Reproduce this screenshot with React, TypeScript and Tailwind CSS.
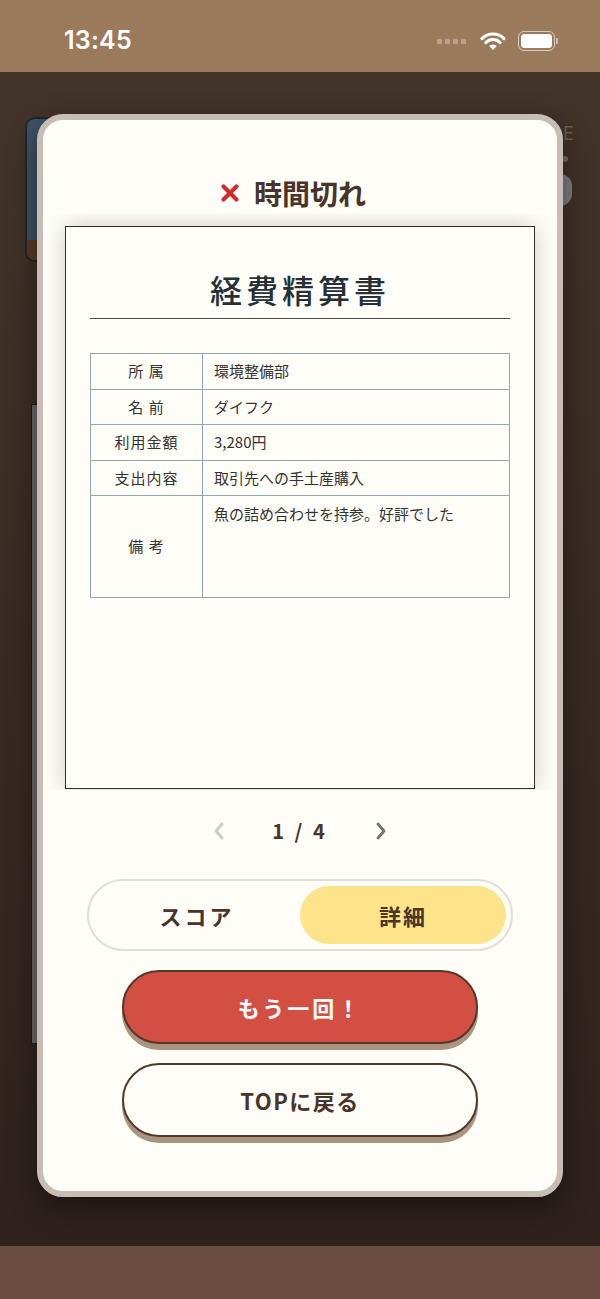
import React from "react";

const JP = { fontFamily: '"Noto Sans CJK JP", "Noto Sans", sans-serif' };

type Row = { label: string; value: string; tall?: boolean };

const ROWS: Row[] = [
  { label: "所 属", value: "環境整備部" },
  { label: "名 前", value: "ダイフク" },
  { label: "利用金額", value: "3,280円" },
  { label: "支出内容", value: "取引先への手土産購入" },
  { label: "備 考", value: "魚の詰め合わせを持参。好評でした", tall: true },
];

function StatusBar() {
  return (
    <div className="h-[72px] bg-[#9b7a5c] flex items-center justify-between pl-[64px] pr-[42px] pt-[10px]">
      <span
        className="text-white text-[25px] font-semibold tracking-[0.2px]"
        style={{ fontFamily: "Inter, Roboto, sans-serif" }}
      >
        13:45
      </span>
      <div className="flex items-center gap-[12px]">
        <div className="flex items-center gap-[3px] mr-[2px]">
          {[0, 1, 2, 3].map(i => (
            <span key={i} className="w-[5px] h-[5px] rounded-[1px] bg-white/30" />
          ))}
        </div>
        <svg width="26" height="20" viewBox="0 0 26 20">
          <path d="M13 19 L9.2 15 A5.5 5.5 0 0 1 16.8 15 Z" fill="#fff" />
          <path d="M5.8 11.6 A10.2 10.2 0 0 1 20.2 11.6" stroke="#fff" strokeWidth="3" fill="none" strokeLinecap="round" />
          <path d="M2 7.6 A15.6 15.6 0 0 1 24 7.6" stroke="#fff" strokeWidth="3" fill="none" strokeLinecap="round" />
        </svg>
        <div className="flex items-center">
          <div className="w-[37px] h-[20px] rounded-[6px] border-[1.5px] border-white/60 p-[2px]">
            <div className="w-full h-full rounded-[3.5px] bg-white" />
          </div>
          <div className="w-[2px] h-[6px] rounded-r-[1px] bg-white/50 ml-[1px]" />
        </div>
      </div>
    </div>
  );
}

function Chevron({ dir, color }: { dir: "left" | "right"; color: string }) {
  return (
    <svg width="14" height="20" viewBox="0 0 14 20">
      <path
        d={dir === "left" ? "M10 3 L4 10 L10 17" : "M4 3 L10 10 L4 17"}
        stroke={color}
        strokeWidth="2.8"
        fill="none"
        strokeLinecap="round"
        strokeLinejoin="round"
      />
    </svg>
  );
}

function Document() {
  return (
    <div className="mx-[22px] h-[563px] border-[1.5px] border-[#2f2f2f] bg-[#fffdf8] shadow-[0_0_22px_rgba(0,0,0,0.2)] px-[24px]">
      <div className="pt-[40px] pb-[7px] border-b border-[#4a4a4a] text-center">
        <h1 className="text-[32px] leading-[44px] font-medium tracking-[4px] text-[#263036]" style={JP}>
          経費精算書
        </h1>
      </div>
      <table className="w-full mt-[34px] border-collapse text-[15px] text-[#333]" style={JP}>
        <tbody>
          {ROWS.map(r => (
            <tr key={r.label} className={r.tall ? "h-[102px]" : "h-[35.5px]"}>
              <td className="w-[112px] border border-[#93a7b0] text-center align-middle tracking-[1px]">{r.label}</td>
              <td
                className={`border border-[#93a7b0] pl-[11px] ${r.tall ? "align-top pt-[7px]" : "align-middle"}`}
              >
                {r.value}
              </td>
            </tr>
          ))}
        </tbody>
      </table>
    </div>
  );
}

function Modal() {
  return (
    <div className="absolute left-[37px] top-[42px] w-[526px] h-[1083px] rounded-[26px] border-[6px] border-[#c8bdb5] bg-[#fffdf7] shadow-[0_10px_30px_rgba(0,0,0,0.45)] flex flex-col">
      <div className="pt-[55px] pr-[14px] h-[91px] flex items-center justify-center gap-[14px]">
        <svg width="20" height="20" viewBox="0 0 20 20">
          <path d="M3.5 3.5 L16.5 16.5 M16.5 3.5 L3.5 16.5" stroke="#d12b2b" strokeWidth="4.2" strokeLinecap="round" />
        </svg>
        <span className="text-[28px] leading-[36px] font-bold text-[#4a3328]" style={JP}>
          時間切れ
        </span>
      </div>

      <div className="mt-[3px] h-[576px] overflow-hidden pt-[12px]">
        <Document />
      </div>

      <div className="mt-[25px] h-[32px] flex items-center justify-center gap-[46px]">
        <Chevron dir="left" color="#cfcac4" />
        <span className="text-[20px] font-bold text-[#4a3328] tracking-[3px]" style={JP}>
          1 / 4
        </span>
        <Chevron dir="right" color="#7a706a" />
      </div>

      <div className="mt-[32px] mx-[44px] h-[72px] rounded-full border-2 border-[#e3ded6] bg-[#fffdf7] p-[5px] grid grid-cols-2" style={JP}>
        <div className="flex items-center justify-center text-[22px] font-bold text-[#4a3328] tracking-[3px]">
          スコア
        </div>
        <div className="flex items-center justify-center rounded-full bg-[#fde48a] text-[22px] font-bold text-[#4a3328] tracking-[2px]">
          詳細
        </div>
      </div>

      <button
        className="mt-[19px] mx-[79px] h-[74px] rounded-full border-2 border-[#55372a] bg-[#d44f43] shadow-[0_6px_0_#a8947f] text-white text-[22px] font-bold tracking-[3px]"
        style={JP}
      >
        もう一回！
      </button>
      <button
        className="mt-[19px] mx-[79px] h-[74px] rounded-full border-2 border-[#55372a] bg-[#fffdf7] shadow-[0_6px_0_#a8947f] text-[#4a3328] text-[22px] font-bold tracking-[1.5px]"
        style={JP}
      >
        TOPに戻る
      </button>
    </div>
  );
}

export default function App() {
  return (
    <div className="relative w-[600px] h-[1299px] overflow-hidden flex flex-col bg-[#3a2b23]">
      <StatusBar />
      <div className="relative flex-1 bg-gradient-to-b from-[#43342a] to-[#2f221c]">
        {/* game screen peeking out behind the dialog */}
        <div className="absolute left-[25px] top-[45px] w-[60px] h-[145px] rounded-[10px] border-2 border-[#1e272d] bg-[#3d5366] overflow-hidden">
          <div className="absolute bottom-0 left-0 right-0 h-[20px] bg-[#5a3b25]" />
        </div>
        <div className="absolute left-[31px] top-[332px] w-[10px] h-[640px] border border-[#1c1c1c] bg-[#6a6a68]" />
        <span className="absolute left-[563px] top-[48px] text-[18px] text-[#6e6055]" style={{ fontFamily: "Inter, sans-serif" }}>
          E
        </span>
        <div className="absolute left-[562px] top-[84px] w-[6px] h-[6px] rounded-full bg-[#7a6e66]" />
        <div className="absolute left-[548px] top-[102px] w-[24px] h-[32px] rounded-full bg-[#7d7e80]" />
        <Modal />
      </div>
      <div className="h-[53px] bg-[#6b4d42]" />
    </div>
  );
}
